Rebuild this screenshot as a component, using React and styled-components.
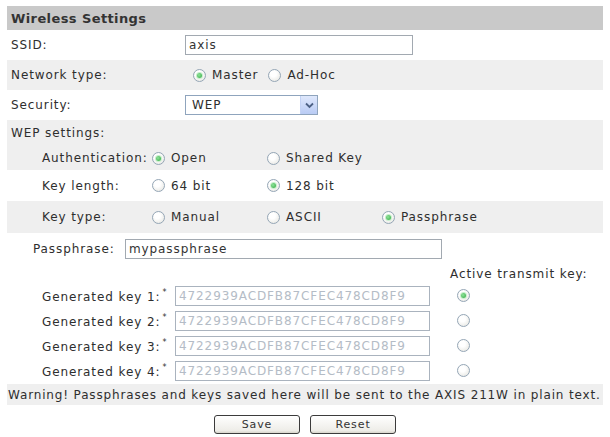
import React from 'react'
import styled, { createGlobalStyle } from 'styled-components'

const Global = createGlobalStyle`
  body { margin: 0; background: #fff; }
`
const Panel = styled.div`
  width: 596px; padding: 6px 7px 0;
  font-family: "DejaVu Sans", Verdana, sans-serif; font-size: 12px; color: #2e2e2e;
  letter-spacing: 0.9px;
`
const Header = styled.div`
  height: 24px; display: flex; align-items: center; padding-left: 4px;
  background: #c9c9c9; font-weight: bold; font-size: 13px; color: #333;
  letter-spacing: 0.4px;
`
const Row = styled.div`
  display: flex; align-items: center;
  height: ${p => p.$h || 30}px;
  padding-left: ${p => p.$pl ?? 4}px;
  background: ${p => p.$shade ? '#efefef' : 'transparent'};
  white-space: nowrap;
`
const Label = styled.div`
  width: ${p => p.$w}px; flex-shrink: 0;
`
const TextInput = styled.input`
  box-sizing: border-box; width: ${p => p.$w}px; height: 20px;
  border: 1px solid #a2a9b1; padding: 0 3px; margin: 0;
  font: inherit; letter-spacing: inherit; color: #333; background: #fff;
  &:disabled { color: #b4bcc6; border-color: #aab3be; background: #fff; }
`
const Select = styled.div`
  box-sizing: border-box; width: 133px; height: 20px;
  display: flex; align-items: stretch;
  border: 1px solid #8fa4bd; background: #fff;
`
const SelectText = styled.span`
  flex: 1; display: flex; align-items: center; padding-left: 6px;
`
const SelectBtn = styled.span`
  width: 16px; display: flex; align-items: center; justify-content: center;
  background: linear-gradient(#dfe8fc, #b9cbf4); border-left: 1px solid #c3d2f4;
`
const Option = styled.label`
  display: flex; align-items: center; gap: 6px;
  width: ${p => (p.$w ? p.$w + 'px' : 'auto')};
  margin-left: ${p => p.$ml || 0}px;
`
const Radio = styled.span`
  position: relative; width: 11px; height: 11px; flex-shrink: 0;
  border: 1px solid #95a6b6; border-radius: 50%;
  background: radial-gradient(circle at 40% 35%, #fff 30%, #e2e2dc 100%);
  margin-left: ${p => p.$ml || 0}px;
  &::after {
    content: ''; display: ${p => p.$checked ? 'block' : 'none'};
    position: absolute; left: 3px; top: 3px; width: 5px; height: 5px; border-radius: 50%;
    background: radial-gradient(circle at 40% 40%, #8fe39a, #2fa83f);
    box-shadow: 0 0 0 1px #c8efcc;
  }
`
const Star = styled.sup`
  font-size: 8px; margin-left: 2px; vertical-align: 6px;
`
const Hint = styled.div`
  margin-left: ${p => p.$ml}px;
`
const Warning = styled(Row)`
  margin-top: 1px; padding-left: 1px; letter-spacing: 0.85px;
`
const Buttons = styled.div`
  display: flex; justify-content: center; gap: 10px; margin-top: 10px;
`
const Button = styled.button`
  width: 86px; height: 19px; padding: 0;
  border: 1px solid #3b3b3b; border-radius: 3px;
  background: linear-gradient(#ffffff, #eeede8 85%, #d8d6cc);
  font: inherit; font-size: 11px; letter-spacing: 0.9px; color: #333;
`

const KEY = '4722939ACDFB87CFEC478CD8F9'

function Chevron() {
  return (
    <svg width="9" height="7" viewBox="0 0 9 7">
      <path d="M1 1.5 L4.5 5 L8 1.5" fill="none" stroke="#4d6185" strokeWidth="1.8" />
    </svg>
  )
}

function Choice({ checked, children, w, ml }) {
  return (
    <Option $w={w} $ml={ml}>
      <Radio $checked={checked} />
      {children}
    </Option>
  )
}

export default function App() {
  return (
    <Panel>
      <Global />
      <Header>Wireless Settings</Header>
      <Row>
        <Label $w={174}>SSID:</Label>
        <TextInput $w={228} defaultValue="axis" />
      </Row>
      <Row $shade>
        <Label $w={174}>Network type:</Label>
        <Choice checked ml={8}>Master</Choice>
        <Choice ml={10}>Ad-Hoc</Choice>
      </Row>
      <Row>
        <Label $w={174}>Security:</Label>
        <Select>
          <SelectText>WEP</SelectText>
          <SelectBtn><Chevron /></SelectBtn>
        </Select>
      </Row>
      <Row $shade $h={26}>WEP settings:</Row>
      <Row $shade $h={24} $pl={35}>
        <Label $w={110}>Authentication:</Label>
        <Choice checked w={115}>Open</Choice>
        <Choice w={115}>Shared Key</Choice>
      </Row>
      <Row $h={31} $pl={35}>
        <Label $w={110}>Key length:</Label>
        <Choice w={115}>64 bit</Choice>
        <Choice checked w={115}>128 bit</Choice>
      </Row>
      <Row $shade $h={32} $pl={35}>
        <Label $w={110}>Key type:</Label>
        <Choice w={115}>Manual</Choice>
        <Choice w={115}>ASCII</Choice>
        <Choice checked w={115}>Passphrase</Choice>
      </Row>
      <Row $h={32} $pl={26}>
        <Label $w={92}>Passphrase:</Label>
        <TextInput $w={317} defaultValue="mypassphrase" />
      </Row>
      <Row $h={18} $pl={0}>
        <Hint $ml={443}>Active transmit key:</Hint>
      </Row>
      {[1, 2, 3, 4].map(n => (
        <Row key={n} $h={25} $pl={35}>
          <Label $w={133}>Generated key {n}:<Star>*</Star></Label>
          <TextInput $w={255} value={KEY} disabled readOnly />
          <Radio $checked={n === 1} $ml={27} />
        </Row>
      ))}
      <Warning $shade $h={21}>
        Warning! Passphrases and keys saved here will be sent to the AXIS 211W in plain text.
      </Warning>
      <Buttons>
        <Button>Save</Button>
        <Button>Reset</Button>
      </Buttons>
    </Panel>
  )
}
